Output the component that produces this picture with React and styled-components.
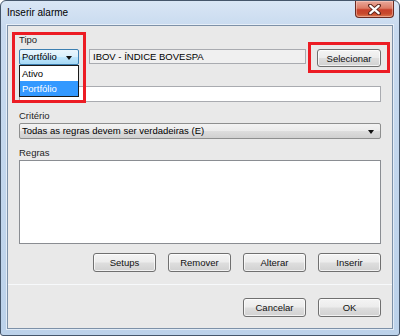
import React from "react";
import styled, { createGlobalStyle } from "styled-components";

const Global = createGlobalStyle`
  html, body { margin: 0; padding: 0; background: #ffffff; }
  body { font-family: "Liberation Sans", Arial, sans-serif; }
  * { box-sizing: border-box; }
`;

const Window = styled.div`
  width: 400px;
  height: 336px;
  border: 1px solid #45566b;
  border-radius: 6px 6px 3px 3px;
  background: linear-gradient(180deg, #d9e6f5 0%, #c8daef 8%, #bcd2ea 100%);
  padding: 0 6px 6px 6px;
  display: flex;
  flex-direction: column;
  font-family: "Liberation Sans", Arial, sans-serif;
  font-size: 9.5px;
  color: #1a1a1a;
`;

const TitleBar = styled.div`
  height: 24px;
  display: flex;
  align-items: flex-start;
  justify-content: space-between;
`;

const Title = styled.div`
  font-size: 10px;
  line-height: 24px;
  color: #000;
`;

const CloseButton = styled.div`
  width: 39px;
  height: 17px;
  margin-right: -1px;
  border: 1px solid #6b2a20;
  border-top: none;
  border-radius: 0 0 4px 4px;
  background: linear-gradient(180deg, #e9a99b 0%, #dc7c66 45%, #c7402a 55%, #c84a2c 80%, #dc7a52 100%);
  box-shadow: inset 0 0 0 1px rgba(255, 220, 210, 0.45);
  display: flex;
  align-items: center;
  justify-content: center;
`;

const Client = styled.div`
  flex: 1;
  border: 1px solid #7d91a8;
  box-shadow: 0 0 0 1px rgba(255, 255, 255, 0.55);
  background: #e9e9e9;
  display: flex;
  flex-direction: column;
`;

const Main = styled.div`
  padding: 7px 11px 12px 11px;
  display: flex;
  flex-direction: column;
`;

const Label = styled.div`
  line-height: 14px;
  height: 14px;
  color: #1e1e1e;
  margin-top: ${(p) => p.$mt || 0}px;
`;

const TopRow = styled.div`
  display: flex;
  align-items: flex-start;
  margin-top: 2px;
`;

const Group = styled.div`
  position: relative;
  width: ${(p) => p.$w}px;
  flex: none;
`;

const RedFrame = styled.div`
  position: absolute;
  left: ${(p) => p.$l}px;
  right: ${(p) => p.$r}px;
  top: ${(p) => p.$t}px;
  bottom: ${(p) => p.$b}px;
  border: 3px solid #ec1c24;
  pointer-events: none;
  z-index: 5;
`;

const ComboBox = styled.div`
  height: 16px;
  border: 1px solid ${(p) => (p.$hot ? "#3c7fb1" : "#8e8f8f")};
  border-radius: 2px;
  background: ${(p) =>
    p.$hot
      ? "linear-gradient(180deg, #eaf6fd 0%, #d9f0fc 48%, #bee6fd 52%, #a7d9f5 100%)"
      : "linear-gradient(180deg, #f3f3f3 0%, #ebebeb 48%, #dddddd 52%, #d0d0d0 100%)"};
  display: flex;
  align-items: center;
  justify-content: space-between;
  padding: 0 6px 0 2px;
  line-height: 14px;
  color: #000;
  white-space: nowrap;
`;

const Arrow = styled.span`
  width: 0;
  height: 0;
  border-left: 3.5px solid transparent;
  border-right: 3.5px solid transparent;
  border-top: 4px solid #111;
  margin-top: 2px;
`;

const DropList = styled.div`
  position: absolute;
  left: 0;
  top: 100%;
  width: 100%;
  border: 1px solid #1a1a1a;
  background: #fff;
  z-index: 4;
`;

const DropItem = styled.div`
  height: 15px;
  line-height: 15px;
  padding-left: 2px;
  background: ${(p) => (p.$sel ? "#3399ff" : "#fff")};
  color: ${(p) => (p.$sel ? "#fff" : "#000")};
`;

const TextBox = styled.div`
  height: ${(p) => p.$h || 16}px;
  border: 1px solid #a9abb0;
  background: ${(p) => (p.$ro ? "#f0f0f0" : "#ffffff")};
  line-height: ${(p) => (p.$h || 16) - 2}px;
  padding-left: 3px;
  color: #000;
  white-space: nowrap;
`;

const FlexBox = styled.div`
  flex: 1;
  margin: 0 11px 0 10px;
`;

const WideBox = styled(TextBox)`
  margin-top: 19px;
`;

const ListBox = styled.div`
  height: 84px;
  border: 1px solid #8a8d92;
  background: #fff;
`;

const Button = styled.button`
  width: ${(p) => p.$w || 63}px;
  height: ${(p) => p.$h || 19}px;
  border: 1px solid #707070;
  border-radius: 3px;
  background: linear-gradient(180deg, #f4f4f4 0%, #ececec 48%, #dedede 52%, #d1d1d1 100%);
  box-shadow: inset 0 0 0 1px rgba(255, 255, 255, 0.7);
  font-family: "Liberation Sans", Arial, sans-serif;
  font-size: 9.5px;
  color: #111;
  padding: 0;
  flex: none;
`;

const ButtonRow = styled.div`
  display: flex;
  justify-content: flex-end;
  gap: 12px;
  margin-top: ${(p) => p.$mt || 0}px;
`;

const Footer = styled.div`
  border-top: 1px solid #f7f9fb;
  padding: 13px 11px 0 11px;
`;

function CloseX() {
  return (
    <svg width="13" height="11" viewBox="0 0 13 11">
      <path d="M2 1.5 L11 9.5 M11 1.5 L2 9.5" stroke="#5a231a" strokeWidth="4" strokeLinecap="round" />
      <path d="M2.3 1.8 L10.7 9.2 M10.7 1.8 L2.3 9.2" stroke="#ffffff" strokeWidth="2.2" strokeLinecap="round" />
    </svg>
  );
}

export default function App() {
  return (
    <>
      <Global />
      <Window>
        <TitleBar>
          <Title>Inserir alarme</Title>
          <CloseButton>
            <CloseX />
          </CloseButton>
        </TitleBar>
        <Client>
          <Main>
            <Label>Tipo</Label>
            <TopRow>
              <Group $w={60}>
                <RedFrame $l={-7} $r={-7} $t={-17} $b={-38} />
                <ComboBox $hot>
                  <span>Portfólio</span>
                  <Arrow />
                </ComboBox>
                <DropList>
                  <DropItem>Ativo</DropItem>
                  <DropItem $sel>Portfólio</DropItem>
                </DropList>
              </Group>
              <FlexBox>
                <TextBox $ro $h={15}>IBOV - ÍNDICE BOVESPA</TextBox>
              </FlexBox>
              <Group $w={64}>
                <RedFrame $l={-9} $r={-9} $t={-7} $b={-6} />
                <Button $w={64} $h={18}>Selecionar</Button>
              </Group>
            </TopRow>
            <WideBox />
            <Label $mt={7}>Critério</Label>
            <ComboBox>
              <span>Todas as regras devem ser verdadeiras (E)</span>
              <Arrow />
            </ComboBox>
            <Label $mt={7}>Regras</Label>
            <ListBox />
            <ButtonRow $mt={9}>
              <Button>Setups</Button>
              <Button>Remover</Button>
              <Button>Alterar</Button>
              <Button>Inserir</Button>
            </ButtonRow>
          </Main>
          <Footer>
            <ButtonRow>
              <Button>Cancelar</Button>
              <Button>OK</Button>
            </ButtonRow>
          </Footer>
        </Client>
      </Window>
    </>
  );
}
